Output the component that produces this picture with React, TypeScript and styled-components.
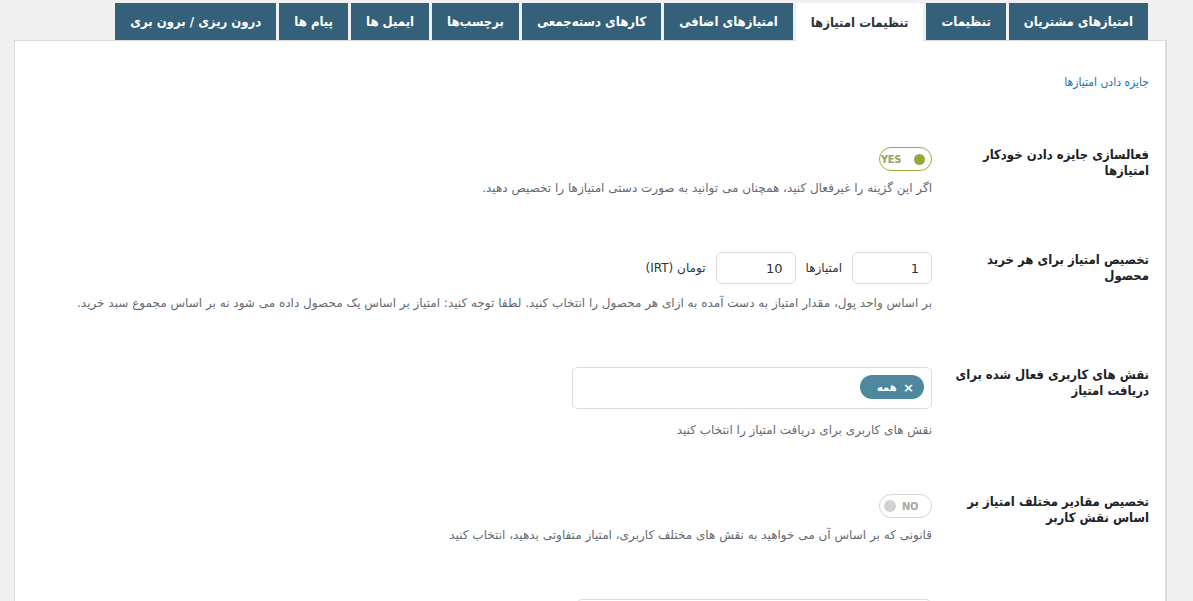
import React from "react";
import styled, { createGlobalStyle } from "styled-components";

const GlobalStyle = createGlobalStyle`
  html, body {
    margin: 0;
    padding: 0;
    background: #f0f0f1;
  }
  body {
    font-family: "DejaVu Sans", "Noto Sans", sans-serif;
    color: #2c3338;
  }
`;

const condensed = `"DejaVu Sans Condensed", "DejaVu Sans", sans-serif`;
const regular = `"DejaVu Sans", sans-serif`;

const Page = styled.div`
  direction: rtl;
  padding: 3px 26px 0 14px;
`;

const TabBar = styled.nav`
  display: flex;
  gap: 3px;
  margin-right: 19px;
  position: relative;
  z-index: 1;
`;

const Tab = styled.div<{ active?: boolean }>`
  padding: 0 15px;
  display: flex;
  align-items: center;
  font-family: ${condensed};
  font-size: 13px;
  font-weight: bold;
  white-space: nowrap;
  background: ${(p) => (p.active ? "#ffffff" : "#346179")};
  color: ${(p) => (p.active ? "#2c3338" : "#ffffff")};
  margin-bottom: ${(p) => (p.active ? "-1px" : "0")};
  height: ${(p) => (p.active ? "38px" : "37px")};
`;

const Panel = styled.div`
  background: #ffffff;
  border: 1px solid #dcdcde;
  border-right-width: 2px;
  border-bottom: none;
  min-height: 600px;
`;

const Header = styled.div`
  height: 79px;
  padding: 30px 16px 0 0;
  box-sizing: border-box;
`;

const SectionLink = styled.a`
  font-family: ${condensed};
  font-size: 12px;
  line-height: 16px;
  color: #2271b1;
  text-decoration: none;
`;

const Form = styled.div`
  display: flex;
  flex-direction: column;
`;

const Row = styled.div`
  display: grid;
  grid-template-columns: 217px 1fr;
  padding: 27px 16px 28px 0;
`;

const Label = styled.div`
  width: 200px;
  font-family: ${condensed};
  font-size: 13px;
  line-height: 16px;
  font-weight: bold;
  color: #1d2327;
`;

const Field = styled.div`
  display: flex;
  flex-direction: column;
  align-items: flex-start;
`;

const Description = styled.p<{ space: number }>`
  margin: ${(p) => p.space}px 0 0;
  font-family: ${regular};
  font-size: 12px;
  line-height: 18px;
  color: #646970;
`;

const Toggle = styled.div<{ on: boolean }>`
  direction: ltr;
  box-sizing: border-box;
  width: 53px;
  height: 24px;
  border-radius: 12px;
  border: 1.5px solid ${(p) => (p.on ? "#9aad3c" : "#d5d5d5")};
  background: #ffffff;
  display: flex;
  align-items: center;
  justify-content: space-between;
  flex-direction: ${(p) => (p.on ? "row" : "row-reverse")};
  padding-left: ${(p) => (p.on ? "1px" : "4px")};
  padding-right: ${(p) => (p.on ? "6px" : "13px")};
`;

const ToggleText = styled.span<{ on: boolean }>`
  font-family: ${condensed};
  font-size: 11px;
  font-weight: bold;
  letter-spacing: -0.3px;
  color: ${(p) => (p.on ? "#98a168" : "#a7a7a7")};
`;

const Knob = styled.span<{ on: boolean }>`
  width: ${(p) => (p.on ? 11 : 12)}px;
  height: ${(p) => (p.on ? 11 : 12)}px;
  border-radius: 50%;
  background: ${(p) => (p.on ? "#94a93a" : "#d2d2d2")};
`;

const InlineGroup = styled.div`
  display: flex;
  align-items: center;
  gap: 9px;
`;

const NumberInput = styled.input`
  box-sizing: border-box;
  width: 80px;
  height: 32px;
  border: 1px solid #dcdcde;
  border-radius: 6px;
  padding: 0 12px;
  font-family: ${regular};
  font-size: 13px;
  color: #2c3338;
  text-align: right;
  direction: rtl;
  outline: none;
  background: #ffffff;
`;

const UnitText = styled.span`
  font-family: ${regular};
  font-size: 12px;
  color: #2c3338;
  margin: 0 1px;
`;

const SelectBox = styled.div<{ width: number }>`
  box-sizing: border-box;
  width: ${(p) => p.width}px;
  min-height: 42px;
  border: 1px solid #dcdcde;
  border-radius: 6px;
  padding: 7px;
  display: flex;
  gap: 5px;
  background: #ffffff;
`;

const Chip = styled.span`
  height: 24px;
  width: 64px;
  box-sizing: border-box;
  border-radius: 12px;
  background: #4e889f;
  color: #ffffff;
  display: flex;
  align-items: center;
  justify-content: space-between;
  padding: 0 10px 0 17px;
  font-family: ${condensed};
  font-size: 11px;
  font-weight: bold;
`;

const ChipClose = styled.span`
  font-family: ${regular};
  font-size: 13px;
  font-weight: bold;
  line-height: 1;
`;

const TABS = [
  "امتیازهای مشتریان",
  "تنظیمات",
  "تنظیمات امتیازها",
  "امتیازهای اضافی",
  "کارهای دسته‌جمعی",
  "برچسب‌ها",
  "ایمیل ها",
  "پیام ها",
  "درون ریزی / برون بری",
];

const App: React.FC = () => {
  return (
    <>
      <GlobalStyle />
      <Page>
        <TabBar>
          {TABS.map((t) => (
            <Tab key={t} active={t === "تنظیمات امتیازها"}>
              {t}
            </Tab>
          ))}
        </TabBar>
        <Panel>
          <Header>
            <SectionLink href="#">جایزه دادن امتیازها</SectionLink>
          </Header>
          <Form>
            <Row>
              <Label>فعالسازی جایزه دادن خودکار امتیازها</Label>
              <Field>
                <Toggle on>
                  <ToggleText on>YES</ToggleText>
                  <Knob on />
                </Toggle>
                <Description space={8}>
                  اگر این گزینه را غیرفعال کنید، همچنان می توانید به صورت دستی امتیازها را تخصیص دهید.
                </Description>
              </Field>
            </Row>

            <Row>
              <Label>تخصیص امتیاز برای هر خرید محصول</Label>
              <Field>
                <InlineGroup>
                  <NumberInput defaultValue="1" />
                  <UnitText>امتیازها</UnitText>
                  <NumberInput defaultValue="10" />
                  <UnitText>تومان (IRT)</UnitText>
                </InlineGroup>
                <Description space={10}>
                  بر اساس واحد پول، مقدار امتیاز به دست آمده به ازای هر محصول را انتخاب کنید. لطفا توجه کنید: امتیاز بر اساس یک محصول داده می شود نه بر اساس مجموع سبد خرید.
                </Description>
              </Field>
            </Row>

            <Row>
              <Label>نقش های کاربری فعال شده برای دریافت امتیاز</Label>
              <Field>
                <SelectBox width={360}>
                  <Chip>
                    <ChipClose>×</ChipClose>
                    همه
                  </Chip>
                </SelectBox>
                <Description space={12}>نقش های کاربری برای دریافت امتیاز را انتخاب کنید</Description>
              </Field>
            </Row>

            <Row>
              <Label>تخصیص مقادیر مختلف امتیاز بر اساس نقش کاربر</Label>
              <Field>
                <Toggle on={false}>
                  <ToggleText on={false}>NO</ToggleText>
                  <Knob on={false} />
                </Toggle>
                <Description space={8}>
                  قانونی که بر اساس آن می خواهید به نقش های مختلف کاربری، امتیاز متفاوتی بدهید، انتخاب کنید
                </Description>
              </Field>
            </Row>

            <Row>
              <Label />
              <Field>
                <SelectBox width={356} />
              </Field>
            </Row>
          </Form>
        </Panel>
      </Page>
    </>
  );
};

export default App;
